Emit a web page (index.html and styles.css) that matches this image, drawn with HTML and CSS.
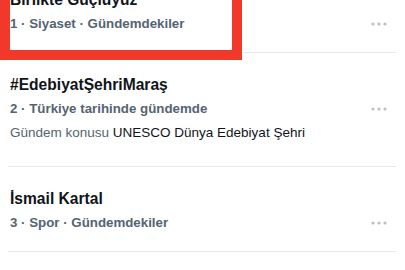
FILE: index.html
```html
<!DOCTYPE html>
<html lang="tr">
<head>
  <meta charset="UTF-8">
  <title>Gündem</title>
  <meta name="viewport" content="width=device-width, initial-scale=1.0">
  <link rel="stylesheet" href="styles.css">
</head>
<body>
  <!-- Gündem listesi -->
  <main class="trends">
    <div class="trend">
      <div class="trend-title">Birlikte Güçlüyüz</div>
      <div class="trend-meta">
        <span>1 · Siyaset · Gündemdekiler</span>
        <svg class="more" width="16" height="4" viewBox="0 0 16 4"><circle cx="2" cy="2" r="1.6"/><circle cx="8" cy="2" r="1.6"/><circle cx="14" cy="2" r="1.6"/></svg>
      </div>
      <!-- İşaretleme kutusu -->
      <div class="highlight"></div>
    </div>

    <div class="trend">
      <div class="trend-title">#EdebiyatŞehriMaraş</div>
      <div class="trend-meta">
        <span>2 · Türkiye tarihinde gündemde</span>
        <svg class="more" width="16" height="4" viewBox="0 0 16 4"><circle cx="2" cy="2" r="1.6"/><circle cx="8" cy="2" r="1.6"/><circle cx="14" cy="2" r="1.6"/></svg>
      </div>
      <div class="trend-desc"><span class="muted">Gündem konusu</span> UNESCO Dünya Edebiyat Şehri</div>
    </div>

    <div class="trend">
      <div class="trend-title">İsmail Kartal</div>
      <div class="trend-meta">
        <span>3 · Spor · Gündemdekiler</span>
        <svg class="more" width="16" height="4" viewBox="0 0 16 4"><circle cx="2" cy="2" r="1.6"/><circle cx="8" cy="2" r="1.6"/><circle cx="14" cy="2" r="1.6"/></svg>
      </div>
    </div>
  </main>
</body>
</html>
```

FILE: styles.css
```css
/* Gündem listesi */
body {
  margin: 0;
  background: #fff;
  font-family: "Liberation Sans", Arial, sans-serif;
  color: #0f1419;
  overflow: hidden;
}
.trends {
  margin: -32px 9px 0 8px;
}
.trend {
  position: relative;
  padding: 20px 9px 16px 2px;
  border-bottom: 1px solid #e7e9ea;
}
.trend-title {
  font-size: 15.6px;
  font-weight: bold;
  line-height: 24px;
}
.trend-meta {
  display: flex;
  justify-content: space-between;
  align-items: center;
  font-size: 13.3px;
  font-weight: bold;
  line-height: 24px;
  color: #536471;
}
.more {
  fill: #b9c0c6;
}
.trend-desc {
  font-size: 13.5px;
  line-height: 24px;
  margin-bottom: 5px;
}
.muted {
  color: #536471;
}
.highlight {
  position: absolute;
  left: -8px;
  top: 0;
  width: 242px;
  height: 92px;
  box-sizing: border-box;
  border: 10px solid #f2372b;
}
```
